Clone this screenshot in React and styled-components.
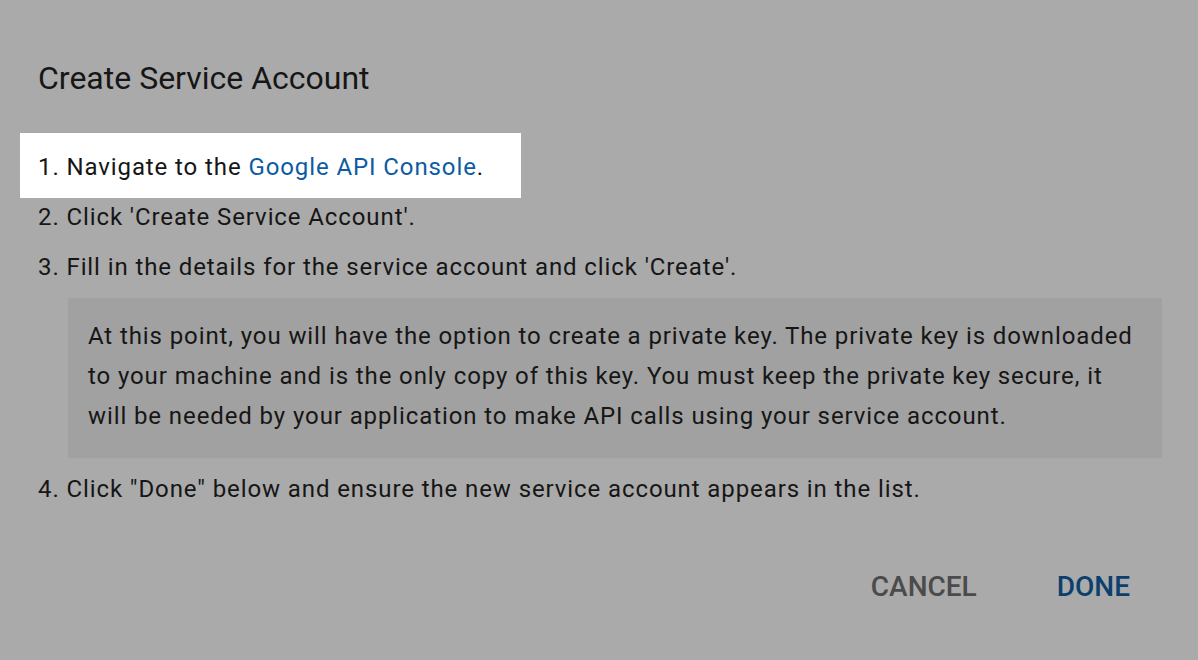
import React from 'react'
import styled, { createGlobalStyle } from 'styled-components'

const GlobalStyle = createGlobalStyle`
    html, body {
        margin: 0;
        padding: 0;
        background: #aaaaaa;
    }
    body {
        font-family: Roboto, "Liberation Sans", Arial, sans-serif;
        color: #161616;
    }
`
const Dialog = styled.div`
    width: 1198px;
    height: 660px;
    box-sizing: border-box;
    padding: 58px 0 0 38px;
    display: flex;
    flex-direction: column;
`
const Title = styled.h2`
    margin: 0;
    font-size: 32px;
    line-height: 40px;
    font-weight: 400;
    color: #161616;
`
const Steps = styled.ol`
    list-style: none;
    margin: 44px 0 0;
    padding: 0;
    font-size: 24px;
    line-height: 50px;
    letter-spacing: 0.9px;
`
const Step = styled.li`
    display: block;
    width: ${props => props.highlight ? '483px' : 'auto'};
    margin: ${props => props.highlight ? '-9px 0 -6px -18px' : '0'};
    padding: ${props => props.highlight ? '9px 0 6px 18px' : '0'};
    background: ${props => props.highlight ? '#ffffff' : 'transparent'};
    white-space: nowrap;
`
const Link = styled.a`
    color: #0d5ca2;
    text-decoration: none;
`
const Note = styled.div`
    margin: 6px 36px 6px 30px;
    padding: 18px 20px 22px;
    background: #a1a1a1;
    font-size: 24px;
    line-height: 40px;
`
const Actions = styled.div`
    display: flex;
    justify-content: flex-end;
    gap: 80px;
    margin-top: 53px;
    padding-right: 68px;
`
const Button = styled.button`
    border: none;
    background: none;
    padding: 0;
    font-family: inherit;
    font-size: 28px;
    line-height: 40px;
    font-weight: 500;
    color: ${props => props.primary ? '#0b3f6e' : '#4b4b4b'};
    cursor: pointer;
`

const App = () => {
    return (
        <>
            <GlobalStyle />
            <Dialog>
                <Title>Create Service Account</Title>
                <Steps>
                    <Step highlight>
                        1. Navigate to the <Link href="#">Google API Console</Link>.
                    </Step>
                    <Step>2. Click 'Create Service Account'.</Step>
                    <Step>3. Fill in the details for the service account and click 'Create'.</Step>
                    <Note>
                        At this point, you will have the option to create a private key. The private key is downloaded
                        to your machine and is the only copy of this key. You must keep the private key secure, it
                        will be needed by your application to make API calls using your service account.
                    </Note>
                    <Step>4. Click "Done" below and ensure the new service account appears in the list.</Step>
                </Steps>
                <Actions>
                    <Button>CANCEL</Button>
                    <Button primary>DONE</Button>
                </Actions>
            </Dialog>
        </>
    )
}

export default App
